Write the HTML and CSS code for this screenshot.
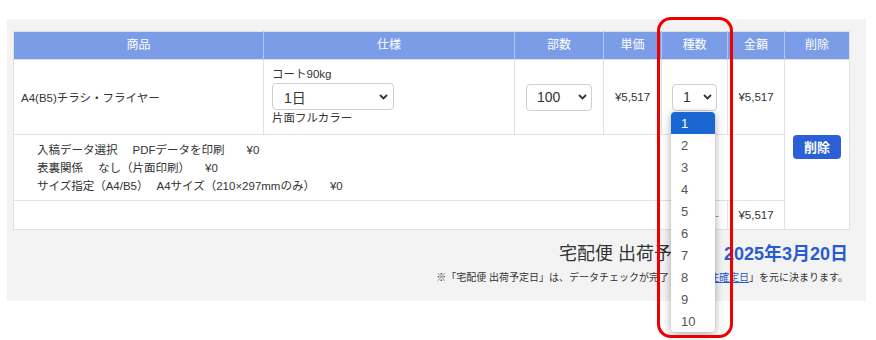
FILE: index.html
```html
<!DOCTYPE html>
<html lang="ja">
<head>
<meta charset="utf-8">
<title>カート</title>
<link rel="stylesheet" href="styles.css">
</head>
<body>
<div class="page">
  <div class="panel">
    <table class="cart">
      <colgroup>
        <col class="c-name"><col class="c-spec"><col class="c-qty"><col class="c-unit"><col class="c-kind"><col class="c-amt"><col class="c-del">
      </colgroup>
      <thead>
        <tr><th>商品</th><th>仕様</th><th>部数</th><th>単価</th><th>種数</th><th>金額</th><th>削除</th></tr>
      </thead>
      <tbody>
        <tr class="item">
          <td class="name">A4(B5)チラシ・フライヤー</td>
          <td class="spec">
            <div class="line">コート90kg</div>
            <div class="select sel-spec"><span>1日</span><svg width="9" height="6" viewBox="0 0 9 6"><path d="M1 1l3.5 3.5L8 1" stroke="#333" stroke-width="1.8" fill="none"/></svg></div>
            <div class="line">片面フルカラー</div>
          </td>
          <td class="mid"><div class="select sel-qty"><span>100</span><svg width="9" height="6" viewBox="0 0 9 6"><path d="M1 1l3.5 3.5L8 1" stroke="#333" stroke-width="1.8" fill="none"/></svg></div></td>
          <td class="mid">¥5,517</td>
          <td class="mid"><div class="select sel-kind"><span>1</span><svg width="9" height="6" viewBox="0 0 9 6"><path d="M1 1l3.5 3.5L8 1" stroke="#333" stroke-width="1.8" fill="none"/></svg></div></td>
          <td class="mid">¥5,517</td>
          <td class="del" rowspan="3"><button class="btn-del">削除</button></td>
        </tr>
        <tr class="opts">
          <td colspan="6">
            <div>入稿データ選択<span class="gap">PDFデータを印刷</span><span class="gap price">¥0</span></div>
            <div>表裏関係<span class="gap g2">なし（片面印刷）</span><span class="gap">¥0</span></div>
            <div>サイズ指定（A4/B5）<span class="gap g3">A4サイズ（210×297mmのみ）</span><span class="gap">¥0</span></div>
          </td>
        </tr>
        <tr class="total">
          <td colspan="5" class="sub">合計 -</td>
          <td class="mid">¥5,517</td>
        </tr>
      </tbody>
    </table>
    <div class="ship">宅配便 出荷予定日<span class="date">2025年3月20日</span></div>
    <p class="note">※「宅配便 出荷予定日」は、データチェックが完了した「<a href="#">受注確定日</a>」を元に決まります。</p>
  </div>

  <ul class="popup">
    <li class="on">1</li><li>2</li><li>3</li><li>4</li><li>5</li><li>6</li><li>7</li><li>8</li><li>9</li><li>10</li>
  </ul>
  <div class="mark"></div>
</div>
</body>
</html>
```

FILE: styles.css
```css
* { box-sizing: border-box; }
html, body { margin: 0; padding: 0; background: #fff; }
body {
  font-family: "Liberation Sans", "Noto Sans CJK JP", sans-serif;
  color: #333;
  font-size: 11.5px;
}
.page { position: relative; width: 876px; height: 340px; overflow: hidden; padding-top: 19px; }
.panel {
  margin-left: 7px;
  width: 859px;
  background: #f3f3f3;
  padding: 12px 17px 15px 6px;
}
.cart {
  width: 836px;
  table-layout: fixed;
  border-collapse: collapse;
  background: #fff;
  border: 1px solid #e2e2e2;
}
.c-name { width: 250px; }
.c-spec { width: 251px; }
.c-qty { width: 89px; }
.c-unit { width: 58px; }
.c-kind { width: 66px; }
.c-amt { width: 57px; }
.c-del { width: 65px; }
.cart th {
  background: #7b9de8;
  color: #fff;
  font-weight: normal;
  font-size: 12px;
  line-height: 17px;
  padding: 5px 0;
  border-left: 1px solid #b3c6f1;
  text-align: center;
}
.cart th:first-child { border-left: none; }
.cart td {
  border: 1px solid #e2e2e2;
  vertical-align: middle;
  padding: 0;
}
.name { padding-left: 7px !important; }
.spec { padding: 6px 8px 7px !important; }
.line { line-height: 17px; }
.mid { text-align: center; }
.select {
  display: flex;
  align-items: center;
  justify-content: space-between;
  height: 27px;
  border: 1px solid #cfcfcf;
  border-radius: 4px;
  background: #fff;
  font-size: 14px;
  color: #333;
}
.select svg { flex: none; }
.sel-spec { width: 122px; padding: 0 5px 0 11px; }
.sel-qty { width: 66px; padding: 0 4px 0 10px; margin: 0 auto; }
.sel-kind { width: 45px; padding: 0 4px 0 10px; margin: 0 auto; }
.del { text-align: center; }
.btn-del {
  width: 48px;
  height: 24px;
  border: none;
  border-radius: 4px;
  background: #2b5fd6;
  color: #fff;
  font-family: "Liberation Sans", "Noto Sans CJK JP", sans-serif;
  font-weight: bold;
  font-size: 13px;
  padding: 0;
  margin-top: 4px;
}
.opts td { padding: 6px 8px 5px 23px; line-height: 18px; }
.gap { margin-left: 15px; }
.price { margin-left: 22px; }
.g3 { margin-left: 8px; }
.total td { line-height: 18px; padding: 5px 0; }
.total .sub { text-align: right; padding-right: 8px; color: #888; }
.ship {
  margin-top: 12px;
  padding-right: 1px;
  text-align: right;
  font-size: 18px;
  line-height: 24px;
}
.date { margin-left: 16px; color: #2a5bd2; font-weight: bold; }
.note {
  margin: 4px 0 0;
  padding-right: 1px;
  text-align: right;
  font-size: 10px;
  line-height: 16px;
}
.note a { color: #2a5bd2; }
.popup {
  position: absolute;
  left: 671px;
  top: 112px;
  width: 44px;
  margin: 0;
  padding: 0;
  list-style: none;
  background: #fff;
  border-radius: 4px;
  box-shadow: 0 2px 8px rgba(0,0,0,.35);
  overflow: hidden;
}
.popup li {
  height: 22px;
  line-height: 23px;
  padding-left: 10px;
  font-size: 13px;
  color: #555;
}
.popup li.on { background: #1a66d2; color: #fff; }
.mark {
  position: absolute;
  left: 657px;
  top: 17px;
  width: 76px;
  height: 321px;
  border: 3px solid #ee0000;
  border-radius: 14px;
}
```
